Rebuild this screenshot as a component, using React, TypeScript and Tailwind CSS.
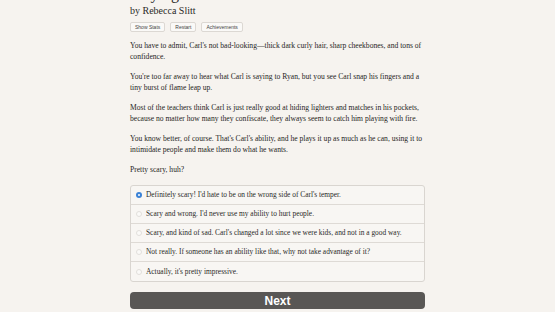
const paragraphs = [
  "You have to admit, Carl's not bad-looking\u2014thick dark curly hair, sharp cheekbones, and tons of confidence.",
  "You're too far away to hear what Carl is saying to Ryan, but you see Carl snap his fingers and a tiny burst of flame leap up.",
  "Most of the teachers think Carl is just really good at hiding lighters and matches in his pockets, because no matter how many they confiscate, they always seem to catch him playing with fire.",
  "You know better, of course. That's Carl's ability, and he plays it up as much as he can, using it to intimidate people and make them do what he wants.",
  "Pretty scary, huh?",
];

const options = [
  "Definitely scary! I'd hate to be on the wrong side of Carl's temper.",
  "Scary and wrong. I'd never use my ability to hurt people.",
  "Scary, and kind of sad. Carl's changed a lot since we were kids, and not in a good way.",
  "Not really. If someone has an ability like that, why not take advantage of it?",
  "Actually, it's pretty impressive.",
];

export default function App() {
  return (
    <div className="h-[312px] w-[555px] overflow-hidden bg-[#f6f3ef] text-[#2b2a28] [font-family:'Liberation_Serif',serif]">
      <div className="mx-auto w-[295px]">
        <h1 className="-mt-[14px] text-[16px] leading-[16px]">Playing with Fire</h1>
        <div className="mt-[2px] text-[10px] leading-[14px]">by Rebecca Slitt</div>

        <div className="mt-[4px] flex gap-[5px]">
          {["Show Stats", "Restart", "Achievements"].map((b) => (
            <button
              key={b}
              className="h-[10px] rounded-[2px] border border-[#dcd8d3] bg-[#faf9f7] px-[4px] text-[5px] leading-[8px] text-[#444] [font-family:'Liberation_Sans',sans-serif]"
            >
              {b}
            </button>
          ))}
        </div>

        <div className="mt-[8px] text-[7.6px] leading-[11px] text-[#262523]">
          {paragraphs.map((p, i) => (
            <p key={i} className="mb-[9px]">
              {p}
            </p>
          ))}
        </div>

        <div className="mt-[10px] overflow-hidden rounded-[3px] border border-[#d9d5d0] bg-[#f8f6f3]">
          {options.map((o, i) => (
            <label
              key={i}
              className="flex h-[19px] items-center gap-[4px] border-b border-[#dedad5] pl-[5px] text-[7.4px] last:border-b-0"
            >
              {i === 0 ? (
                <span className="flex h-[6px] w-[6px] items-center justify-center rounded-full bg-[#3b82d6]">
                  <span className="h-[2px] w-[2px] rounded-full bg-white" />
                </span>
              ) : (
                <span className="h-[6px] w-[6px] rounded-full border-[0.5px] border-[#e2dfdb] bg-[#fbfaf8]" />
              )}
              <span>{o}</span>
            </label>
          ))}
        </div>

        <button className="mt-[10px] flex h-[17px] w-full items-center justify-center rounded-[4px] bg-[#595755] text-[12px] font-bold text-white [font-family:'Liberation_Sans',sans-serif]">
          Next
        </button>
      </div>
    </div>
  );
}
